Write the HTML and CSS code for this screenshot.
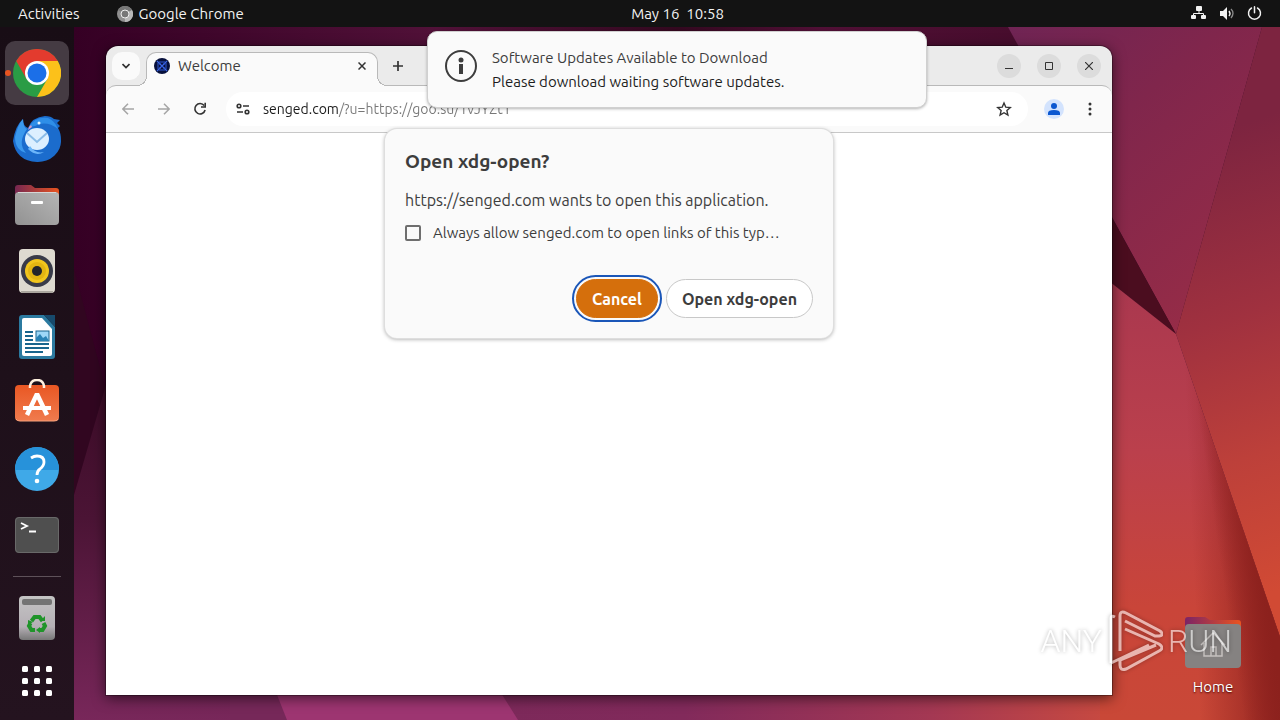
FILE: index.html
```html
<!DOCTYPE html>
<html lang="en">
<head>
    <meta charset="UTF-8">
    <meta name="viewport" content="width=device-width, initial-scale=1.0">
    <title>Desktop</title>
    <link rel="stylesheet" href="styles.css">
</head>
<body>

    <header class="topbar">
        <div class="topbar-left">
            <button class="topbar-btn">Activities</button>
            <button class="topbar-btn app-menu">
                <svg width="16" height="16" viewBox="0 0 16 16"><circle cx="8" cy="8" r="8" fill="#8f8f8f"/><path d="M8 8L1 4a8 8 0 0 1 14 0z" fill="#777"/><path d="M8 8l7-4a8 8 0 0 1-7 12z" fill="#b8b8b8"/><circle cx="8" cy="8" r="4" fill="#777" stroke="#eee" stroke-width="1"/></svg>
                Google Chrome
            </button>
        </div>
        <button class="topbar-btn clock">May 16&nbsp; 10:58</button>
        <button class="topbar-btn status" aria-label="System menu">
            <svg width="16" height="16" viewBox="0 0 16 16" fill="#f2f2f2"><rect x="5" y="0" width="6" height="5" rx="1"/><rect x="0" y="9" width="5" height="4" rx="1"/><rect x="10" y="9" width="5" height="4" rx="1"/><path d="M8 5v3M2.500 10V7.500h10V10" fill="none" stroke="#f2f2f2"/></svg>
            <svg width="16" height="16" viewBox="0 0 16 16" fill="#f2f2f2"><path d="M1 5h3l4-4v13l-4-4H1z"/><path d="M10 5q2 3 0 5" fill="none" stroke="#f2f2f2" stroke-width="1.4"/><path d="M12 3q4 4 0 9" fill="none" stroke="#8a8a8a" stroke-width="1.3"/></svg>
            <svg width="16" height="16" viewBox="0 0 16 16" fill="none" stroke="#f2f2f2" stroke-width="1.500" stroke-linecap="round"><path d="M7.500.8v6M4.500 2a6 6 0 1 0 6 0"/></svg>
        </button>
    </header>

    <div class="screen">
        <nav class="dock" aria-label="Dock">
            <button class="dock-item active" aria-label="Google Chrome">
                <svg width="48" height="48" viewBox="0 0 48 48"><circle cx="24" cy="24" r="24" fill="#2a9c45"/><path d="M3.200 12A24 24 0 0 1 44.800 12H24L13.600 30z" fill="#e33b2e"/><path d="M44.800 12A24 24 0 0 1 24 48L34.400 30 24 12z" fill="#fcc11a"/><circle cx="24" cy="24" r="12" fill="#fff"/><circle cx="24" cy="24" r="9.500" fill="#1b6fe8"/></svg>
            </button>
            <button class="dock-item" aria-label="Thunderbird">
                <svg width="48" height="48" viewBox="0 0 48 48"><path d="M0 26Q2 11 10 4q0 7 5 9 4-11 17-12 6 0 9 3l6 1-3 3 3 3-2 2q3 5 3 12a23 21 0 0 1-24 22Q3 46 0 26z" fill="#1b6ccd"/><path d="M2 22Q5 9 10 4q0 8 4 10Q4 28 13 38 2 35 2 22z" fill="#3a98ed"/><path d="M16 12Q22 1 35 3q7 3 10 11-12-9-23-3z" fill="#2e8ee8"/><ellipse cx="24" cy="24" rx="12" ry="11" fill="#dcefff"/><path d="M14 18l10 9 10-9" fill="none" stroke="#8abce8" stroke-width="2"/><path d="M17 31q5 8 14 6-8 5-16-3z" fill="#6cb6fa"/><circle cx="26" cy="8" r="1.500" fill="#e7f6ff"/><path d="M18 10q-3 2-3 5l4-3z" fill="#d59ac8"/></svg>
            </button>
            <button class="dock-item" aria-label="Files">
                <svg width="48" height="48" viewBox="0 0 48 48"><defs><linearGradient id="tab-fill"><stop offset="0" stop-color="#762751"/><stop offset="1" stop-color="#e95420"/></linearGradient><linearGradient id="folder-fill" x1="0" y1="1" x2="1" y2="0"><stop offset="0" stop-color="#929292"/><stop offset="1" stop-color="#b5b5b5"/></linearGradient></defs><path d="M2 20V7q0-3 3-3h13l4 3h21q3 0 3 3v12z" fill="url(#tab-fill)"/><rect x="2" y="11" width="44" height="33" rx="4" fill="url(#folder-fill)"/><path d="M5 11.500h38" stroke="#d5d5d5"/><rect x="18" y="20" width="12" height="3" rx="1" fill="#fff"/></svg>
            </button>
            <button class="dock-item" aria-label="Rhythmbox">
                <svg width="48" height="48" viewBox="0 0 48 48"><rect x="6" y="2" width="36" height="44" rx="4" fill="#dedad0"/><path d="M8 45h32" stroke="#aaa69e" stroke-width="2"/><circle cx="24" cy="24" r="16" fill="#393b49"/><circle cx="24" cy="24" r="12" fill="#f1c51d"/><circle cx="24" cy="24" r="9" fill="#e2b412"/><circle cx="24" cy="24" r="5" fill="#22242b"/></svg>
            </button>
            <button class="dock-item" aria-label="LibreOffice Writer">
                <svg width="48" height="48" viewBox="0 0 48 48"><path d="M9 2h22l11 12v29q0 3-3 3H9q-3 0-3-3V5q0-3 3-3z" fill="#2b7aa0"/><path d="M11 5h18l10 11v25q0 2-2 2H11q-2 0-2-2V7q0-2 2-2z" fill="#fff"/><path d="M31 2h11v12z" fill="#174a6c"/><path d="M12 19h8M12 23h8M12 27h8M12 31h24M12 35h24M12 39h18" stroke="#19658d" stroke-width="2"/><rect x="23" y="18" width="13" height="10" fill="#9ed7f7" stroke="#19658d"/><path d="M23 28v-3l4-4 3 4 3-2 3 5z" fill="#2a83b5"/></svg>
            </button>
            <button class="dock-item" aria-label="Ubuntu Software">
                <svg width="48" height="48" viewBox="0 0 48 48"><defs><linearGradient id="bag-fill" x1="0" y1="0" x2="0" y2="1"><stop offset="0" stop-color="#e95723"/><stop offset="1" stop-color="#f07b4e"/></linearGradient></defs><rect x="2" y="6" width="44" height="36" rx="4" fill="url(#bag-fill)"/><path d="M3 40q1 2 4 2h34q4 0 4-2" fill="none" stroke="#f6a37f"/><path d="M17 9V7q1-6 7-6t7 6v2" fill="none" stroke="#fff1df" stroke-width="2.500"/><path d="M14 36l10-21 10 21" fill="none" stroke="#fff" stroke-width="4.500" stroke-linejoin="bevel"/><path d="M10 27h28v4H10z" fill="#fff"/></svg>
            </button>
            <button class="dock-item" aria-label="Help">
                <svg width="48" height="48" viewBox="0 0 48 48"><circle cx="24" cy="24" r="22" fill="#3fa9e8"/><path d="M2 25a22 23 0 0 1 44 0z" fill="#2792da"/><path d="M18 13q3-2 6-2 7 0 7 6 0 4-4 7-3 2-3 6" fill="none" stroke="#fff" stroke-width="2.800"/><circle cx="24" cy="36" r="2.300" fill="#fff"/></svg>
            </button>
            <button class="dock-item" aria-label="Terminal">
                <svg width="48" height="48" viewBox="0 0 48 48"><rect x="2" y="6" width="44" height="36" rx="4" fill="#4f4f4f"/><rect x="2.500" y="6.500" width="43" height="35" rx="3.500" fill="none" stroke="#696969"/><path d="M8 12l6 3-6 3M16 20.500h7" fill="none" stroke="#fff" stroke-width="1.800"/></svg>
            </button>
            <hr class="dock-divider">
            <button class="dock-item" aria-label="Trash">
                <svg width="48" height="48" viewBox="0 0 48 48"><defs><linearGradient id="bin-fill" x1="0" y1="0" x2="0" y2="1"><stop offset="0" stop-color="#c4c4c4"/><stop offset=".7" stop-color="#b5afb5"/><stop offset="1" stop-color="#777"/></linearGradient></defs><rect x="6" y="2" width="36" height="44" rx="4" fill="url(#bin-fill)"/><rect x="9" y="5" width="30" height="6" rx="2" fill="#747474"/><g fill="none" stroke="#20942a" stroke-width="4"><path d="M18.500 27l3-4h5l3 4"/><path d="M30.500 29l1.500 3-2.500 4H26"/><path d="M17.500 29L16 32l2.500 4H22"/></g><path d="M27 27h5v-5zM27 33v6l-4-3zM20 28l-5 3v-5z" fill="#20942a"/></svg>
            </button>
            <button class="dock-item apps" aria-label="Show Applications">
                <svg width="48" height="48" viewBox="0 0 48 48" fill="#fff"><rect x="9" y="9" width="6" height="6" rx="1.500"/><rect x="21" y="9" width="6" height="6" rx="1.500"/><rect x="33" y="9" width="6" height="6" rx="1.500"/><rect x="9" y="21" width="6" height="6" rx="1.500"/><rect x="21" y="21" width="6" height="6" rx="1.500"/><rect x="33" y="21" width="6" height="6" rx="1.500"/><rect x="9" y="33" width="6" height="6" rx="1.500"/><rect x="21" y="33" width="6" height="6" rx="1.500"/><rect x="33" y="33" width="6" height="6" rx="1.500"/></svg>
            </button>
        </nav>

        <main class="desktop">
            <svg class="wallpaper" viewBox="74 27 1206 693" preserveAspectRatio="none" aria-hidden="true">
                <defs>
                    <linearGradient id="sky"><stop offset="0" stop-color="#350024"/><stop offset=".3" stop-color="#511138"/><stop offset=".5" stop-color="#33081f"/><stop offset=".62" stop-color="#500f35"/><stop offset="1" stop-color="#3b0a22"/></linearGradient>
                    <linearGradient id="left" x1="0" y1="0" x2="0" y2="1"><stop offset="0" stop-color="#3d0c28"/><stop offset=".4" stop-color="#4b1435"/><stop offset="1" stop-color="#78275a"/></linearGradient>
                    <linearGradient id="plum" x1="0" y1="0" x2=".7" y2="1"><stop offset="0" stop-color="#6f2454"/><stop offset=".4" stop-color="#80264c"/><stop offset="1" stop-color="#962c47"/></linearGradient>
                    <linearGradient id="right" gradientUnits="userSpaceOnUse" x1="1225" y1="130" x2="1370" y2="560"><stop offset="0" stop-color="#7d2440"/><stop offset=".4" stop-color="#a0313f"/><stop offset=".7" stop-color="#bd403a"/><stop offset="1" stop-color="#d14a34"/></linearGradient>
                    <linearGradient id="floor" gradientUnits="userSpaceOnUse" x1="287" y1="0" x2="1280" y2="0"><stop offset="0" stop-color="#762859"/><stop offset=".4" stop-color="#822a5b"/><stop offset=".65" stop-color="#a43853"/><stop offset=".83" stop-color="#c84a40"/><stop offset=".9" stop-color="#cb4937"/><stop offset="1" stop-color="#8f2013"/></linearGradient>
                    <linearGradient id="coral" x1="0" y1="0" x2="0" y2="1"><stop offset="0" stop-color="#a8374f"/><stop offset=".4" stop-color="#bb404c"/><stop offset=".75" stop-color="#c94539"/><stop offset="1" stop-color="#c94837"/></linearGradient>
                    <linearGradient id="shade" gradientUnits="userSpaceOnUse" x1="1200" y1="720" x2="1290" y2="716"><stop offset="0" stop-color="#8a1d1b" stop-opacity="0"/><stop offset="1" stop-color="#8c211d"/></linearGradient>
                    <linearGradient id="crease" gradientUnits="userSpaceOnUse" x1="1244" y1="720" x2="1284" y2="714"><stop offset="0" stop-color="#8a1f1d" stop-opacity="0"/><stop offset="1" stop-color="#8c211d"/></linearGradient>
                </defs>
                <path d="M74 27h1206v693H74z" fill="url(#sky)"/>
                <path d="M74 269l32 121-32 105z" fill="#310620"/>
                <path d="M74 495l32-110 200 100v235H74z" fill="url(#left)"/>
                <path d="M230 500h900l150 220H230z" fill="url(#floor)"/>
                <path d="M200 500h180l138 220H287z" fill="#9d3571"/>
                <path d="M1008 27h254l-86 307z" fill="url(#plum)"/>
                <path d="M1262 27h18v610l-104-303z" fill="url(#right)"/>
                <path d="M1100 196l76 138-76-60z" fill="#4b0d1f"/>
                <path d="M1100 274l76 60 104 303v83h-180z" fill="url(#coral)"/>
                <path d="M1176 334l104 303v83h-80z" fill="url(#shade)"/>
                <path d="M1176 334l104 303v83h-36z" fill="url(#crease)"/>
            </svg>

            <section class="window" aria-label="Google Chrome">
                <div class="tabstrip">
                    <button class="tab-search" aria-label="Search tabs"><svg width="8" height="8" viewBox="0 0 8 8" fill="none" stroke="#303030" stroke-width="1.700"><path d="M.5 2L4 5.500 7.500 2"/></svg></button>
                    <div class="tab">
                        <svg width="16" height="16" viewBox="0 0 16 16"><circle cx="8" cy="8" r="8" fill="#07103c"/><path d="M3 3l10 10M13 3L3 13" stroke="#3a66e8" stroke-width="1.200"/><path d="M8 3v2M8 11v2M3 8h2M11 8h2M6 3v3H3M10 3v3h3M6 13v-3H3M10 13v-3h3" stroke="#2f57d0" fill="none"/></svg>
                        <span class="tab-title">Welcome</span>
                        <button class="icon-btn tab-close" aria-label="Close tab"><svg width="8" height="8" viewBox="0 0 8 8" stroke="#333" stroke-width="1.500"><path d="M.5.5l7 7M7.500.5l-7 7"/></svg></button>
                    </div>
                    <button class="icon-btn new-tab" aria-label="New tab"><svg width="12" height="12" viewBox="0 0 12 12" stroke="#333" stroke-width="1.700"><path d="M6 1v10M1 6h10"/></svg></button>
                    <div class="window-controls">
                        <button class="round-btn" aria-label="Minimize"><svg width="8" height="8" viewBox="0 0 8 8"><path d="M0 6.500h8" stroke="#333"/></svg></button>
                        <button class="round-btn" aria-label="Maximize"><svg width="8" height="8" viewBox="0 0 8 8"><path d="M.5.5h7v7h-7z" fill="none" stroke="#333"/></svg></button>
                        <button class="round-btn" aria-label="Close"><svg width="8" height="8" viewBox="0 0 8 8"><path d="M0 0l8 8M8 0L0 8" stroke="#333" stroke-width="1.200"/></svg></button>
                    </div>
                </div>

                <div class="toolbar">
                    <button class="icon-btn" aria-label="Back"><svg width="12" height="12" viewBox="0 0 12 12" fill="none" stroke="#a5a5a5" stroke-width="1.500"><path d="M12 6H1M6 .7L.8 6 6 11.300"/></svg></button>
                    <button class="icon-btn" aria-label="Forward"><svg width="12" height="12" viewBox="0 0 12 12" fill="none" stroke="#a5a5a5" stroke-width="1.500"><path d="M0 6h11M6 .7L11.200 6 6 11.300"/></svg></button>
                    <button class="icon-btn" aria-label="Reload"><svg width="14" height="14" viewBox="0 0 14 14" fill="none" stroke="#333" stroke-width="1.600"><path d="M11.200 3.600A5.200 5.200 0 1 0 12.100 8"/><path d="M12.200.8V5H8"/></svg></button>
                    <form class="omnibox">
                        <button type="button" class="icon-btn site-info" aria-label="View site information"><svg width="14" height="12" viewBox="0 0 14 12" fill="none" stroke="#333" stroke-width="1.600"><circle cx="3" cy="3" r="1.800"/><path d="M7 3h6M1 9h6"/><circle cx="11" cy="9" r="1.800"/></svg></button>
                        <input class="url" type="text" aria-label="Address and search bar" value="senged.com/?u=https://goo.su/1vJYZt1" spellcheck="false">
                        <button type="button" class="icon-btn" aria-label="Bookmark this tab"><svg width="16" height="16" viewBox="0 0 16 16" fill="none" stroke="#333" stroke-width="1.400"><path d="M8 2l1.800 4.200 4.500.4-3.400 3 1 4.400L8 11.700 4.100 14l1-4.400-3.400-3 4.500-.4z"/></svg></button>
                    </form>
                    <button class="icon-btn profile" aria-label="Profile"><svg width="20" height="20" viewBox="0 0 20 20"><circle cx="10" cy="10" r="10" fill="#d3e3fd"/><circle cx="10" cy="7" r="3" fill="#0b57d0"/><path d="M4 16v-2q0-3 6-3t6 3v2z" fill="#0b57d0"/></svg></button>
                    <button class="icon-btn" aria-label="Menu"><svg width="4" height="16" viewBox="0 0 4 16" fill="#333"><circle cx="2" cy="3" r="1.500"/><circle cx="2" cy="8" r="1.500"/><circle cx="2" cy="13" r="1.500"/></svg></button>
                </div>

                <div class="page"></div>

                <div class="dialog" role="dialog" aria-labelledby="dialog-title">
                    <h1 id="dialog-title">Open xdg-open?</h1>
                    <p>https://senged.com wants to open this application.</p>
                    <div class="check-row">
                        <input type="checkbox" id="always-allow">
                        <label for="always-allow">Always allow senged.com to open links of this typ…</label>
                    </div>
                    <div class="dialog-actions">
                        <button class="btn btn-primary">Cancel</button>
                        <button class="btn">Open xdg-open</button>
                    </div>
                </div>
            </section>

            <a class="desktop-icon" href="#home">
                <svg width="56" height="52" viewBox="0 0 56 52"><defs><linearGradient id="home-tab"><stop offset="0" stop-color="#7b2466"/><stop offset="1" stop-color="#ea5420"/></linearGradient></defs><path d="M0 20V4q0-3 3-3h17l5 3h28q3 0 3 3v13z" fill="url(#home-tab)"/><rect y="8" width="56" height="44" rx="4" fill="#858281"/><path d="M16 29l12-12 12 12M19 27v13h18V27M26 40v-9h5v9" fill="none" stroke="#c5c1bf" stroke-width="1.500"/></svg>
                <span>Home</span>
            </a>

            <div class="watermark">
                <span>ANY</span>
                <svg width="56" height="64" viewBox="0 0 56 64" fill="none" stroke="#fff" stroke-width="3"><path d="M4 54V9q0-3 4-1M4 54l38-18M13 42V7q0-6 6-3l34 18q5 4-1 5h-4L18 12M18 20l34 15q6 4 0 7L19 60q-6 2-6-4v-5l36-15"/></svg>
                <span>RUN</span>
            </div>

            <aside class="notification" role="alert">
                <svg width="32" height="32" viewBox="0 0 32 32"><circle cx="16" cy="16" r="15" fill="none" stroke="#3d3d3d" stroke-width="2"/><circle cx="16" cy="10" r="2.500" fill="#3d3d3d"/><path d="M14 14h4v10h-4z" fill="#3d3d3d"/></svg>
                <div class="notification-text">
                    <strong>Software Updates Available to Download</strong>
                    <p>Please download waiting software updates.</p>
                </div>
            </aside>
        </main>
    </div>

</body>
</html>
```
FILE: styles.css
```css
* {
    box-sizing: border-box;
}
body {
    margin: 0;
    height: 100vh;
    display: flex;
    flex-direction: column;
    overflow: hidden;
    background-color: #131313;
    color: #3d3d3d;
    font-family: Ubuntu, "Noto Sans", sans-serif;
    font-size: 15px;
}
button {
    padding: 0;
    border: none;
    background: none;
    color: inherit;
    font-family: inherit;
    font-size: inherit;
    cursor: pointer;
}
svg {
    display: block;
    flex-shrink: 0;
}

/* top bar, the clock is centred over the area right of the dock */
.topbar {
    display: grid;
    grid-template-columns: 74px 1fr auto 1fr;
    align-items: center;
    height: 27px;
    padding: 0 17px 0 18px;
    background-color: #131313;
    color: #f2f2f2;
}
.topbar-left {
    grid-column: 1 / 3;
    display: flex;
    gap: 37px;
}
.app-menu {
    display: flex;
    align-items: center;
    gap: 6px;
}
.status {
    display: flex;
    justify-self: end;
    gap: 12px;
}
.screen {
    flex: 1;
    display: flex;
    min-height: 0;
}

/* dock */
.dock {
    display: flex;
    flex-direction: column;
    align-items: center;
    gap: 2px;
    width: 74px;
    padding-top: 14px;
    background: linear-gradient(#180d15, #24131f);
}
.dock-item {
    position: relative;
    display: flex;
    align-items: center;
    justify-content: center;
    width: 64px;
    height: 64px;
    border-radius: 10px;
}
.dock-item.active {
    background-color: #453b43;
}
.dock-item.active::before {
    content: "";
    position: absolute;
    left: 0;
    width: 6px;
    height: 6px;
    border-radius: 50%;
    background-color: #e95420;
}
.dock-divider {
    width: 48px;
    height: 1px;
    margin: 7px 0;
    border: none;
    background-color: #5e5159;
}
.apps {
    height: 58px;
}

/* desktop */
.desktop {
    position: relative;
    flex: 1;
    display: flex;
    min-width: 0;
    padding: 19px 168px 25px 32px;
}
.wallpaper {
    position: absolute;
    inset: 0;
    width: 100%;
    height: 100%;
}
.desktop-icon {
    position: absolute;
    right: 39px;
    bottom: 23px;
    display: flex;
    flex-direction: column;
    align-items: center;
    gap: 9px;
    color: #fff;
    line-height: 20px;
    text-decoration: none;
    text-shadow: 0 1px 2px #400;
}
.watermark {
    position: absolute;
    right: 48px;
    bottom: 47px;
    display: flex;
    align-items: center;
    gap: 5px;
    color: #fff;
    font-family: Roboto, sans-serif;
    font-size: 32px;
    font-weight: 300;
    opacity: 0.6;
    filter: drop-shadow(0 0 2px rgba(0, 0, 0, 0.5));
}

/* browser window */
.window {
    position: relative;
    flex: 1;
    display: flex;
    flex-direction: column;
    min-width: 0;
    border-radius: 12px 12px 0 0;
    background-color: #ebebeb;
    box-shadow: 0 0 0 1px rgba(0, 0, 0, 0.3), 0 3px 14px rgba(0, 0, 0, 0.6);
}
.tabstrip {
    display: flex;
    align-items: center;
    height: 39px;
    padding: 0 11px 0 6px;
}
.tab-search {
    display: flex;
    align-items: center;
    justify-content: center;
    width: 28px;
    height: 28px;
    border-radius: 10px;
    background-color: #fafafa;
}
.tab {
    position: relative;
    z-index: 1;
    align-self: flex-end;
    display: flex;
    align-items: center;
    gap: 8px;
    width: 232px;
    height: 34px;
    margin: 0 6px -1px;
    padding: 0 7px 8px 7px;
    border: 1px solid #b9b9b9;
    border-bottom: none;
    border-radius: 10px 10px 0 0;
    background-color: #fafafa;
}
.tab::before,
.tab::after {
    content: "";
    position: absolute;
    bottom: 0;
    width: 10px;
    height: 10px;
}
.tab::before {
    left: -10px;
    background: radial-gradient(circle at 0 0, #ebebeb 9px, #b9b9b9 9px 10px, #fafafa 10px);
}
.tab::after {
    right: -10px;
    background: radial-gradient(circle at 100% 0, #ebebeb 9px, #b9b9b9 9px 10px, #fafafa 10px);
}
.tab-title {
    flex: 1;
}
.icon-btn {
    display: flex;
    align-items: center;
    justify-content: center;
    width: 28px;
    height: 28px;
}
.tab-close {
    width: 16px;
    height: 16px;
}
.window-controls {
    display: flex;
    gap: 16px;
    margin-left: auto;
}
.round-btn {
    display: flex;
    align-items: center;
    justify-content: center;
    width: 24px;
    height: 24px;
    border-radius: 50%;
    background-color: #dcdcdc;
}
.toolbar {
    display: flex;
    align-items: center;
    gap: 8px;
    height: 48px;
    padding: 0 8px;
    border-top: 1px solid #b9b9b9;
    border-bottom: 1px solid #c8c8c8;
    border-radius: 10px 10px 0 0;
    background-color: #fafafa;
}
.omnibox {
    flex: 1;
    display: flex;
    align-items: center;
    height: 34px;
    margin-left: 4px;
    padding: 0 10px 0 3px;
    border-radius: 17px;
    background-color: #fff;
}
.url {
    flex: 1;
    min-width: 0;
    margin-left: 6px;
    padding: 0;
    border: none;
    outline: none;
    /* host is darker than the rest of the address */
    background: linear-gradient(90deg, #1a1a1a 75px, #777 75px);
    -webkit-background-clip: text;
    background-clip: text;
    color: transparent;
    font-family: inherit;
    font-size: 14px;
}
.profile {
    margin-left: 4px;
}
.page {
    flex: 1;
    background-color: #fff;
}

/* protocol dialog */
.dialog {
    position: absolute;
    top: 83px;
    left: 50%;
    transform: translateX(-50%);
    width: 448px;
    padding: 20px;
    border-radius: 12px;
    background-color: #fafafa;
    box-shadow: 0 0 0 1px #dedede, 0 1px 4px rgba(0, 0, 0, 0.4);
}
.dialog h1 {
    margin: 0;
    font-size: 19px;
    font-weight: 600;
    line-height: 24px;
}
.dialog p {
    margin: 16px 0 11px;
    font-size: 16px;
    line-height: 22px;
}
.check-row {
    display: flex;
    align-items: center;
    gap: 12px;
    line-height: 22px;
}
.check-row input {
    appearance: none;
    width: 16px;
    height: 16px;
    margin: 0;
    border: 2px solid #6e6e6e;
    border-radius: 2px;
}
.check-row input:checked {
    background-color: #d56f0c;
}
.dialog-actions {
    display: flex;
    justify-content: flex-end;
    gap: 8px;
    margin-top: 35px;
}
.btn {
    height: 39px;
    padding: 0 15px;
    border: 1px solid #c8c8c8;
    border-radius: 20px;
    background-color: #fff;
    font-size: 16px;
    font-weight: 600;
}
.btn-primary {
    border-color: #d56f0c;
    background-color: #d56f0c;
    color: #fff;
    outline: 2px solid #1a56b8;
    outline-offset: 2px;
}

/* notification */
.notification {
    position: absolute;
    top: 4px;
    left: 50%;
    transform: translateX(-50%);
    display: flex;
    align-items: flex-start;
    gap: 15px;
    width: 500px;
    padding: 14px 17px 13px;
    border: 1px solid #d0d0d0;
    border-radius: 10px;
    background-color: #fafafa;
    box-shadow: 0 1px 3px rgba(0, 0, 0, 0.3);
}
.notification svg {
    margin-top: 4px;
}
.notification-text {
    line-height: 24px;
}
.notification strong {
    display: block;
    font-weight: 400;
}
.notification p {
    margin: 0;
    color: #1d1d1d;
}
```
